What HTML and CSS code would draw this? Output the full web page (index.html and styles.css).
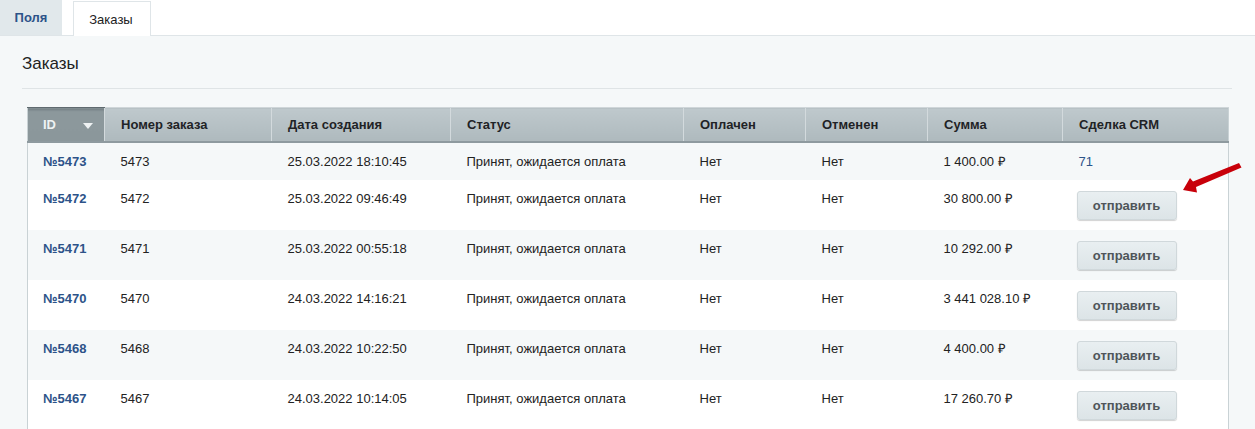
FILE: index.html
```html
<!DOCTYPE html>
<html lang="ru">
<head>
<meta charset="utf-8">
<title>Заказы</title>
<link rel="stylesheet" href="styles.css">
</head>
<body>

<!-- tabs -->
<div class="tabs">
	<div class="tab">Поля</div>
	<div class="tab tab-active">Заказы</div>
</div>

<div class="content">
	<h2 class="title">Заказы</h2>

	<table class="grid">
		<colgroup>
			<col class="c-id">
			<col class="c-num">
			<col class="c-date">
			<col class="c-status">
			<col class="c-paid">
			<col class="c-cancel">
			<col class="c-sum">
			<col class="c-crm">
		</colgroup>
		<thead>
			<tr>
				<th class="sorted">ID <span class="sort-arrow"></span></th>
				<th>Номер заказа</th>
				<th>Дата создания</th>
				<th>Статус</th>
				<th>Оплачен</th>
				<th>Отменен</th>
				<th>Сумма</th>
				<th>Сделка CRM</th>
			</tr>
		</thead>
		<tbody>
			<tr>
				<td><a class="id-link" href="#">№5473</a></td>
				<td>5473</td>
				<td>25.03.2022 18:10:45</td>
				<td>Принят, ожидается оплата</td>
				<td>Нет</td>
				<td>Нет</td>
				<td>1 400.00 ₽</td>
				<td><a class="crm-link" href="#">71</a></td>
			</tr>
			<tr>
				<td><a class="id-link" href="#">№5472</a></td>
				<td>5472</td>
				<td>25.03.2022 09:46:49</td>
				<td>Принят, ожидается оплата</td>
				<td>Нет</td>
				<td>Нет</td>
				<td>30 800.00 ₽</td>
				<td class="btn-cell"><button class="send">отправить</button></td>
			</tr>
			<tr>
				<td><a class="id-link" href="#">№5471</a></td>
				<td>5471</td>
				<td>25.03.2022 00:55:18</td>
				<td>Принят, ожидается оплата</td>
				<td>Нет</td>
				<td>Нет</td>
				<td>10 292.00 ₽</td>
				<td class="btn-cell"><button class="send">отправить</button></td>
			</tr>
			<tr>
				<td><a class="id-link" href="#">№5470</a></td>
				<td>5470</td>
				<td>24.03.2022 14:16:21</td>
				<td>Принят, ожидается оплата</td>
				<td>Нет</td>
				<td>Нет</td>
				<td>3 441 028.10 ₽</td>
				<td class="btn-cell"><button class="send">отправить</button></td>
			</tr>
			<tr>
				<td><a class="id-link" href="#">№5468</a></td>
				<td>5468</td>
				<td>24.03.2022 10:22:50</td>
				<td>Принят, ожидается оплата</td>
				<td>Нет</td>
				<td>Нет</td>
				<td>4 400.00 ₽</td>
				<td class="btn-cell"><button class="send">отправить</button></td>
			</tr>
			<tr>
				<td><a class="id-link" href="#">№5467</a></td>
				<td>5467</td>
				<td>24.03.2022 10:14:05</td>
				<td>Принят, ожидается оплата</td>
				<td>Нет</td>
				<td>Нет</td>
				<td>17 260.70 ₽</td>
				<td class="btn-cell"><button class="send">отправить</button></td>
			</tr>
		</tbody>
	</table>
</div>

<!-- red pointer drawn over the screenshot -->
<svg class="pointer" width="66" height="36" viewBox="0 0 66 36">
	<polygon fill="#c8000a" points="3,30 10,18 13,21.5 59,3 61.5,7.5 16,27 17,32.5"/>
</svg>

</body>
</html>
```

FILE: styles.css
```css
html, body { margin:0; padding:0; }

body	{ font-family:"Liberation Sans", Arial, sans-serif;
	  font-size:13px;
	  color:#222;
	  background:#f5f8f9;
	  position:relative;
	  height:429px;
	  overflow:hidden;
}

/* tabs */
.tabs	{ display:flex;
	  align-items:flex-end;
	  height:35px;
	  background:#fff;
	  border-bottom:1px solid #dfe5e8;
}

.tab	{ width:62px;
	  height:35px;
	  line-height:36px;
	  text-align:center;
	  background:#e1e8eb;
	  color:#2d5389;
	  font-weight:bold;
}

.tab-active	{ width:78px;
		  height:35px;
		  margin-left:11px;
		  margin-bottom:-1px;
		  background:#fff;
		  color:#222;
		  font-weight:normal;
		  border:1px solid #dfe5e8;
		  border-bottom:none;
		  box-sizing:border-box;
		  line-height:35px;
		  padding-right:2px;
}

/* content */
.content	{ padding:0 23px 0 22px; }

.title	{ margin:0;
	  padding:18px 0 14px 0;
	  font-size:17px;
	  font-weight:normal;
	  color:#222;
	  border-bottom:1px solid #dfe4e6;
}

/* grid */
.grid	{ table-layout:fixed;
	  border-collapse:collapse;
	  width:1201px;
	  margin:18px 0 0 5px;
	  border-left:1px solid #c9d2d5;
	  border-right:1px solid #c9d2d5;
}

.c-id	{ width:77px; }
.c-num	{ width:167px; }
.c-date	{ width:179px; }
.c-status	{ width:233px; }
.c-paid	{ width:122px; }
.c-cancel	{ width:122px; }
.c-sum	{ width:135px; }
.c-crm	{ width:166px; }

.grid th	{ height:33px;
		  padding:0 0 0 16px;
		  text-align:left;
		  font-weight:bold;
		  color:#1f2326;
		  background:linear-gradient(#bfc9cd, #aeb9bd);
		  border-left:1px solid #d3dadd;
		  border-top:1px solid #cfd6d9;
		  border-bottom:2px solid #8e9a9f;
}

.grid th:first-child	{ border-left:none; padding-left:15px; }

.grid th.sorted	{ background:linear-gradient(#6f7b80 0, #8c989c 3px, #8b979b);
		  color:#eef2f3;
		  border-top-color:#5f6a6f;
		  position:relative;
}

.sort-arrow	{ position:absolute;
		  right:11px;
		  top:15px;
		  border-left:5px solid transparent;
		  border-right:5px solid transparent;
		  border-top:6px solid #eef2f3;
}

.grid td	{ padding:12px 0 12px 15px;
		  vertical-align:top;
		  line-height:13px;
		  white-space:nowrap;
}

.grid td + td	{ padding-left:16px; }

.grid tbody tr:nth-child(odd)	{ background:#f5f8f9; }
.grid tbody tr:nth-child(even)	{ background:#fff; }

.grid td.btn-cell	{ padding:11px 0 10px 14px; }

.id-link	{ color:#2d5389;
		  font-weight:bold;
		  text-decoration:none;
}

.crm-link	{ color:#2d5389;
		  text-decoration:none;
}

button.send	{ width:100px;
		  height:29px;
		  font-family:"Liberation Sans", Arial, sans-serif;
		  font-size:13px;
		  font-weight:bold;
		  color:#4f5559;
		  background:linear-gradient(#e9eff1, #dce4e7);
		  border:1px solid #d0d8db;
		  border-radius:3px;
		  box-shadow:0 1px 1px rgba(0,0,0,0.18);
		  padding:0;
}

/* arrow overlay */
.pointer	{ position:absolute;
		  left:1180px;
		  top:160px;
}
```
